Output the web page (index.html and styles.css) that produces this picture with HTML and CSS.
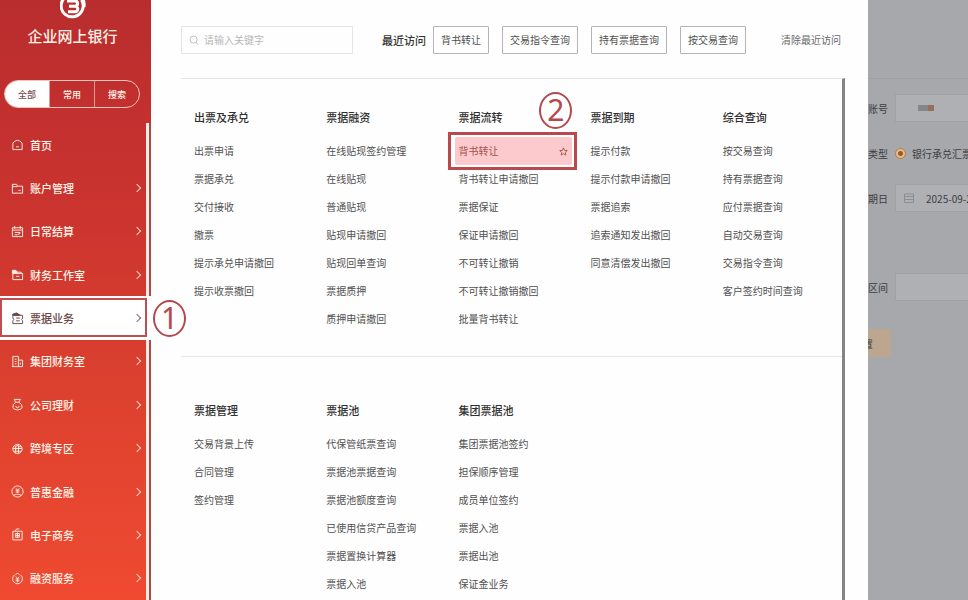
FILE: index.html
```html
<!DOCTYPE html>
<html lang="zh-CN">
<head>
<meta charset="utf-8">
<title>企业网上银行</title>
<link rel="stylesheet" href="styles.css">
</head>
<body>
<div class="app">
  <aside class="sidebar">
    <header class="brand">
      <svg class="logo" viewBox="0 0 26 26" aria-hidden="true">
        <path d="M16 2.500A11 11 0 1 0 21.500 7" fill="none" stroke="currentColor" stroke-width="3"/>
        <path d="M7 8H15A2.600 2.600 0 0 1 15 13.200H9M15 13.200A2.800 2.800 0 0 1 15 18.800H8" fill="none" stroke="currentColor" stroke-width="3"/>
        <path d="M20.500 2Q25.500 7 24.500 14" fill="none" stroke="currentColor" stroke-width="2"/>
      </svg>
      <h1>企业网上银行</h1>
    </header>
    <div class="tabs">
      <button class="tab on" type="button">全部</button>
      <button class="tab" type="button">常用</button>
      <button class="tab" type="button">搜索</button>
    </div>
    <nav class="menu">
      <a href="#" class="entry"><svg viewBox="0 0 14 14"><path d="M2 5.500Q7-.5 12 5.500V12.500H2ZM5.500 9.500H8.500"/></svg><span>首页</span></a>
      <a href="#" class="entry"><svg viewBox="0 0 14 14"><path d="M1.500 12V2.500H6L7 4.500H12.500V12ZM1.500 5H7M8 9H10.500"/></svg><span>账户管理</span><i class="arrow"></i></a>
      <a href="#" class="entry"><svg viewBox="0 0 14 14"><path d="M1.500 3H12.500V12.500H1.500ZM1.500 5.500H12.500M4 1V4M10 1V4M4 8H10M4 10.500H7L10 9"/></svg><span>日常结算</span><i class="arrow"></i></a>
      <a href="#" class="entry"><svg viewBox="0 0 14 14"><path d="M2 6H12.500V12.500H2ZM1.500 6V2.500H5.500L7 4.500H11V6M5.500 9H9"/><path d="M2 3H5L7 5.500H2Z" fill="currentColor"/></svg><span>财务工作室</span><i class="arrow"></i></a>
      <a href="#" class="entry active" aria-current="page"><svg viewBox="0 0 14 14"><path d="M2 3.500H12.500V6.500Q10.500 8 12.500 9.500V12.500H2V9.500Q4 8 2 6.500ZM5.500 6.500H9.500M5.500 9.500H9.500"/><path d="M1.500 2.500 6 1 10 3.500H2Z" fill="currentColor"/></svg><span>票据业务</span><i class="arrow"></i></a>
      <a href="#" class="entry"><svg viewBox="0 0 14 14"><path d="M2 12.500V1.500H8V12.500M8 5.500H12.500V12.500H1M4 4.500H6M4 7H6M4 9.500H6M10 8V10.500"/></svg><span>集团财务室</span><i class="arrow"></i></a>
      <a href="#" class="entry"><svg viewBox="0 0 14 14"><path d="M5 4.500 3.500 1.500H10L8.500 4.500ZM5 4.500Q1.500 7 2 10 2.500 12.800 7 12.800T12 10Q12.500 7 8.500 4.500M5 8.500Q5.500 10.500 7 10.500T9 8.500"/></svg><span>公司理财</span><i class="arrow"></i></a>
      <a href="#" class="entry"><svg viewBox="0 0 14 14"><circle cx="7" cy="7.500" r="5"/><path d="M2 7H12M3 10H11M4 5 8 3.500V12M5 5V12M8 5H11"/></svg><span>跨境专区</span><i class="arrow"></i></a>
      <a href="#" class="entry"><svg viewBox="0 0 14 14"><circle cx="7" cy="7" r="6"/><path d="M5 3.500 7 5.500 9 3.500M5 5.500H9M7 5.500V8.500M5 7.500H9M3 11 6 10H8L11 11"/></svg><span>普惠金融</span><i class="arrow"></i></a>
      <a href="#" class="entry"><svg viewBox="0 0 14 14"><path d="M2 3.500H12V12.800H2ZM4.500 3.500 6 1H9M5 6H9V10H5ZM5 8H9M7 5V10"/></svg><span>电子商务</span><i class="arrow"></i></a>
      <a href="#" class="entry"><svg viewBox="0 0 14 14"><path d="M4 3A5.300 5.300 0 1 0 10 3M5 3 7 1 9 3M5 5 7 7 9 5M5 7.500H9M5 9.500H9M7 7V11"/></svg><span>融资服务</span><i class="arrow"></i></a>
    </nav>
    <span class="mark mark-one">1</span>
  </aside>

  <main class="panel">
    <div class="toolbar">
      <label class="search">
        <svg viewBox="0 0 12 12" aria-hidden="true"><circle cx="5.500" cy="5.500" r="4.300"/><path d="M8.500 9 11 11"/></svg>
        <input type="text" placeholder="请输入关键字" aria-label="请输入关键字">
      </label>
      <strong class="recent">最近访问</strong>
      <div class="chips">
        <button type="button">背书转让</button>
        <button type="button">交易指令查询</button>
        <button type="button">持有票据查询</button>
        <button type="button">按交易查询</button>
      </div>
      <a href="#" class="clear">清除最近访问</a>
    </div>
    <div class="content">
      <section class="group">
        <div class="col"><h2>出票及承兑</h2><a href="#">出票申请</a><a href="#">票据承兑</a><a href="#">交付接收</a><a href="#">撤票</a><a href="#">提示承兑申请撤回</a><a href="#">提示收票撤回</a></div>
        <div class="col"><h2>票据融资</h2><a href="#">在线贴现签约管理</a><a href="#">在线贴现</a><a href="#">普通贴现</a><a href="#">贴现申请撤回</a><a href="#">贴现回单查询</a><a href="#">票据质押</a><a href="#">质押申请撤回</a></div>
        <div class="col"><h2>票据流转</h2><a href="#" class="picked">背书转让<svg viewBox="0 0 10 10" aria-hidden="true"><path d="M5 1 6.200 3.800 9.200 4 6.900 6 7.600 9 5 7.400 2.400 9 3.100 6 .8 4 3.800 3.800Z"/></svg></a><a href="#">背书转让申请撤回</a><a href="#">票据保证</a><a href="#">保证申请撤回</a><a href="#">不可转让撤销</a><a href="#">不可转让撤销撤回</a><a href="#">批量背书转让</a><span class="mark mark-two">2</span></div>
        <div class="col"><h2>票据到期</h2><a href="#">提示付款</a><a href="#">提示付款申请撤回</a><a href="#">票据追索</a><a href="#">追索通知发出撤回</a><a href="#">同意清偿发出撤回</a></div>
        <div class="col"><h2>综合查询</h2><a href="#">按交易查询</a><a href="#">持有票据查询</a><a href="#">应付票据查询</a><a href="#">自动交易查询</a><a href="#">交易指令查询</a><a href="#">客户签约时间查询</a></div>
      </section>
      <section class="group">
        <div class="col"><h2>票据管理</h2><a href="#">交易背景上传</a><a href="#">合同管理</a><a href="#">签约管理</a></div>
        <div class="col"><h2>票据池</h2><a href="#">代保管纸票查询</a><a href="#">票据池票据查询</a><a href="#">票据池额度查询</a><a href="#">已使用信贷产品查询</a><a href="#">票据置换计算器</a><a href="#">票据入池</a></div>
        <div class="col"><h2>集团票据池</h2><a href="#">集团票据池签约</a><a href="#">担保顺序管理</a><a href="#">成员单位签约</a><a href="#">票据入池</a><a href="#">票据出池</a><a href="#">保证金业务</a></div>
      </section>
    </div>
  </main>

  <form class="behind">
    <div class="field"><label for="account">账号</label><div class="box"><span class="masked"></span><input id="account" type="text"></div></div>
    <div class="field"><span>类型</span><label class="choice"><input type="radio" name="kind" checked>银行承兑汇票</label></div>
    <div class="field"><label for="due">期日</label><div class="box"><svg viewBox="0 0 10 10" aria-hidden="true"><path d="M.5 1H9.500V9.500H.5ZM.5 3.500H9.500M.5 6.500H9.500"/></svg><input id="due" type="text" value="2025-09-2"></div></div>
    <div class="field last"><label for="range">区间</label><div class="box"><input id="range" type="text"></div></div>
    <button type="reset" class="reset">置</button>
  </form>
</div>
</body>
</html>
```
FILE: styles.css
```css
* { box-sizing: border-box; }

body {
  margin: 0;
  font-family: "Noto Sans CJK SC", sans-serif;
  font-size: 10px;
  color: #505050;
  background: #a7a8ac;
}

a { color: inherit; text-decoration: none; }
button, input { font: inherit; color: inherit; }
h1, h2 { margin: 0; }
svg { fill: none; stroke: currentColor; flex: none; }

.app {
  display: grid;
  grid-template-columns: 151px minmax(0, 717fr) minmax(0, 100fr);
  grid-template-rows: 100%;
  height: 100vh;
  overflow: hidden;
}

/* Sidebar */
.sidebar {
  position: relative;
  z-index: 1;
  display: flex;
  flex-direction: column;
  color: #fff3e8;
  background: linear-gradient(#b92d2e, #c8322f 30%, #dc412f 65%, #f04a31);
}

.brand {
  display: flex;
  flex-direction: column;
  align-items: center;
  height: 80px;
  padding-right: 6px;
}

.logo { width: 26px; height: 26px; margin-top: -7px; color: #fff; }

.brand h1 {
  margin-top: 5px;
  font-size: 15px;
  line-height: 24px;
  font-weight: 500;
}

.tabs {
  flex: none;
  display: flex;
  height: 28px;
  margin: 0 11px 15px 4px;
  border: 1px solid #f0c4b8;
  border-radius: 14px;
  overflow: hidden;
}

.tab {
  flex: 1;
  padding: 0;
  border: 0;
  border-left: 1px solid #e29a92;
  background: none;
  font-size: 9px;
  font-weight: 500;
}

.tab.on { border: 0; background: #fff; color: #7c4a4a; }

.menu {
  flex: 1;
  min-height: 0;
  display: flex;
  flex-direction: column;
  border-right: 2px solid #a84a48;
}

.entry {
  flex: 1;
  display: flex;
  align-items: center;
  gap: 6px;
  padding: 0 6px 0 11px;
  border-right: 3px solid #fbe9e2;
  font-size: 11px;
  font-weight: 500;
}

.entry svg { width: 13px; height: 13px; }

.arrow {
  width: 6px;
  height: 6px;
  margin-left: auto;
  border: solid currentColor;
  border-width: 1px 1px 0 0;
  opacity: .8;
  transform: rotate(45deg);
}

.entry.active {
  position: relative;
  margin-right: -2px;
  border-right-width: 5px;
  border-color: #fff;
  background: #fff;
  color: #6a4444;
}

.entry.active::before {
  content: "";
  position: absolute;
  inset: 2px -1px 3px 0;
  border: 2px solid #c14d50;
}

.mark {
  position: absolute;
  width: 33px;
  height: 37px;
  border: 2px solid #b5484b;
  border-radius: 50%;
  color: #b5484b;
  font-family: "Noto Sans", sans-serif;
  font-size: 30px;
  line-height: 32px;
  text-align: center;
}

.mark-one { top: 300px; left: 153px; }
.mark-two { top: -15px; left: 94px; }

/* Menu panel */
.panel {
  display: flex;
  flex-direction: column;
  min-width: 0;
  padding: 25px 23px 0 30px;
  background: #fefefe;
}

.toolbar {
  flex: none;
  display: flex;
  align-items: center;
  height: 53px;
  padding-bottom: 24px;
  margin-right: 4px;
  white-space: nowrap;
}

.search {
  display: flex;
  align-items: center;
  gap: 5px;
  width: 172px;
  height: 28px;
  padding: 0 7px;
  border: 1px solid #e4e4e4;
  color: #b5b5b5;
}

.search svg { width: 10px; height: 10px; }

.search input {
  flex: 1;
  min-width: 0;
  padding: 0;
  border: 0;
  outline: 0;
  background: none;
}

.search input::placeholder { color: #b8b8b8; }

.recent {
  margin: 0 7px 0 29px;
  font-size: 11px;
  font-weight: 500;
  color: #333;
}

.chips { display: flex; gap: 13px; }

.chips button {
  height: 28px;
  padding: 0 7px;
  border: 1px solid #b4b4b4;
  border-radius: 1px;
  background: #fff;
}

.clear { margin-left: auto; color: #666; }

.content {
  flex: 1;
  min-height: 0;
  overflow: hidden;
  border-top: 1px solid #e6e6e6;
  border-right: 3px solid #848484;
}

.group {
  display: grid;
  grid-template-columns: repeat(5, 1fr);
  padding: 28px 0 23px;
}

.group + .group { border-top: 1px solid #e6e6e6; padding-top: 43px; }

.col {
  position: relative;
  display: flex;
  flex-direction: column;
  padding-left: 13px;
}

.col h2 {
  margin-bottom: 10px;
  font-size: 11px;
  line-height: 20px;
  font-weight: 500;
  color: #303030;
}

.col a { line-height: 28px; white-space: nowrap; }

.col .picked {
  position: relative;
  display: flex;
  align-items: center;
  justify-content: space-between;
  margin: 0 6px 0 -3px;
  padding: 0 4px 0 3px;
  border-radius: 2px;
  background: #fcc9cc;
  color: #a3524f;
}

.picked::before {
  content: "";
  position: absolute;
  inset: -5px -5px -5px -7px;
  border: 3px solid #b9494c;
}

.picked svg { width: 9px; height: 9px; }

/* Dimmed page */
.behind {
  display: flex;
  flex-direction: column;
  align-items: flex-start;
  min-width: 0;
  overflow: hidden;
  white-space: nowrap;
  color: #3c3d42;
}

.behind::before {
  content: "";
  width: 100%;
  height: 78px;
  margin-bottom: 15px;
  border-bottom: 1px solid #9fa0a4;
}

.field { display: flex; align-items: center; height: 28px; margin-bottom: 17px; }
.field > :first-child { width: 27px; }
.field.last { margin: 44px 0 28px; }

.box {
  display: flex;
  align-items: center;
  gap: 12px;
  width: 180px;
  height: 28px;
  padding: 0 8px;
  border: 1px solid #a0a1a5;
  background: #afb0b3;
}

.box input { min-width: 0; padding: 0; border: 0; background: none; }
.box svg { width: 10px; height: 10px; color: #8e8f94; }

.masked {
  width: 16px;
  height: 6px;
  margin-left: 14px;
  background: linear-gradient(90deg, #85868b 60%, #94705c 60%);
}

.choice { display: flex; align-items: center; gap: 6px; }

.choice input {
  appearance: none;
  width: 11px;
  height: 11px;
  margin: 0;
  border: 1px solid #b97b3c;
  border-radius: 50%;
  background: radial-gradient(#9a5a24 2px, #e0bd92 3px);
}

.reset {
  width: 23px;
  height: 28px;
  padding: 0;
  border: 0;
  background: #bda68f;
  text-align: left;
  text-indent: -5px;
}
```
